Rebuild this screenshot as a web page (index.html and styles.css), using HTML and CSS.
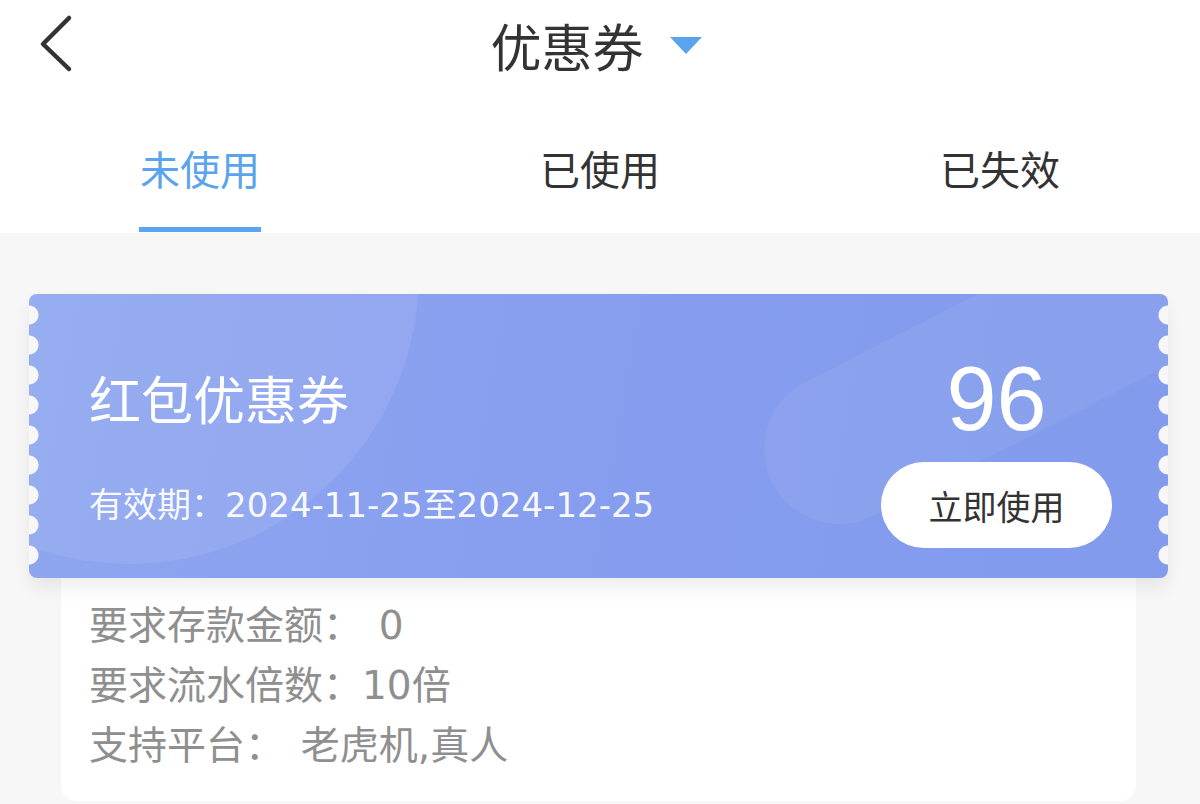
FILE: index.html
```html
<!DOCTYPE html>
<html lang="zh-CN">

<head>
  <meta charset="UTF-8">
  <meta name="viewport" content="width=device-width, initial-scale=1.0">
  <title>优惠券</title>
  <link rel="stylesheet" href="styles.css">
</head>

<body>
  <header class="topbar">
    <a class="back" href="#">
      <svg width="40" height="60" viewBox="0 0 40 60">
        <path d="M31 4 L5 30 L31 55" fill="none" stroke="#333" stroke-width="4.5"
          stroke-linecap="round" stroke-linejoin="round" />
      </svg>
    </a>
    <div class="title">
      <span>优惠券</span>
      <svg class="caret" width="32" height="17" viewBox="0 0 32 17">
        <polygon points="0,0 32,0 16,17" fill="#59a3ef" />
      </svg>
    </div>
  </header>

  <nav class="tabs">
    <div class="tab active">未使用</div>
    <div class="tab">已使用</div>
    <div class="tab">已失效</div>
  </nav>

  <main class="list">
    <div class="coupon">
      <div class="coupon-card">
        <div class="deco"></div>
        <div class="card-left">
          <div class="card-title">红包优惠券</div>
          <div class="card-date">有效期：2024-11-25至2024-12-25</div>
        </div>
        <div class="card-right">
          <div class="amount">96</div>
          <button class="use-btn">立即使用</button>
        </div>
      </div>
      <div class="coupon-detail">
        <p>要求存款金额：&nbsp; 0</p>
        <p>要求流水倍数：10倍</p>
        <p>支持平台：&nbsp; 老虎机,真人</p>
      </div>
    </div>
  </main>
</body>

</html>
```

FILE: styles.css
```css
* {
  box-sizing: border-box;
}

body {
  margin: 0;
  width: 1200px;
  height: 804px;
  overflow: hidden;
  font-family: "Noto Sans CJK SC", "Noto Sans", sans-serif;
  background-color: #f7f7f7;
  color: #333;
}

.topbar {
  position: relative;
  height: 90px;
  background: white;
  display: flex;
  align-items: center;
  justify-content: center;
}

.back {
  position: absolute;
  left: 38px;
  top: 14px;
  display: block;
}

.title {
  display: flex;
  align-items: center;
  gap: 26px;
  font-size: 51px;
  color: #333;
  line-height: 1;
  margin-right: 8px;
}

.tabs {
  height: 143px;
  background: white;
  display: flex;
}

.tab {
  position: relative;
  flex: 1;
  display: flex;
  align-items: center;
  justify-content: center;
  padding-top: 12px;
  font-size: 40px;
  color: #333;
}

.tab.active {
  color: #5ba4ec;
}

.tab.active::after {
  content: "";
  position: absolute;
  left: 139px;
  bottom: 1px;
  width: 122px;
  height: 5px;
  background: #5aa5ef;
}

.list {
  padding: 61px 32px 0 29px;
}

.coupon {
  width: 1139px;
}

.coupon-card {
  position: relative;
  z-index: 2;
  height: 284px;
  border-radius: 8px;
  background: linear-gradient(100deg, #8ea6ef 0%, #869def 55%, #829bec 100%);
  box-shadow: 0 10px 18px rgba(0, 0, 0, 0.07);
  display: flex;
  justify-content: space-between;
  color: white;
}

/* scalloped edges */
.coupon-card::before,
.coupon-card::after {
  content: "";
  position: absolute;
  top: 6px;
  width: 10px;
  height: 270px;
  background-size: 10px 30px;
  background-repeat: repeat-y;
}

.coupon-card::before {
  left: 0;
  background-image: radial-gradient(circle at 0 15px, #f7f7f7 9px, transparent 10px);
}

.coupon-card::after {
  right: 0;
  background-image: radial-gradient(circle at 10px 15px, #f7f7f7 9px, transparent 10px);
}

.deco {
  position: absolute;
  inset: 0;
  overflow: hidden;
  border-radius: 8px;
}

.deco::before {
  content: "";
  position: absolute;
  left: -190px;
  top: -310px;
  width: 580px;
  height: 580px;
  border-radius: 50%;
  background: rgba(255, 255, 255, 0.08);
}

.deco::after {
  content: "";
  position: absolute;
  left: 735px;
  top: 80px;
  width: 560px;
  height: 150px;
  border-radius: 75px;
  background: rgba(255, 255, 255, 0.05);
  transform: rotate(-27deg);
  transform-origin: 75px 75px;
}

.card-left {
  position: relative;
  padding: 72px 0 0 60px;
}

.card-title {
  font-size: 52px;
  line-height: 64px;
}

.card-date {
  margin-top: 55px;
  font-family: "DejaVu Sans", "Noto Sans CJK SC", sans-serif;
  font-size: 34px;
  line-height: 40px;
  color: rgba(255, 255, 255, 0.95);
}

.card-right {
  position: relative;
  display: flex;
  flex-direction: column;
  align-items: center;
  padding: 54px 56px 0 0;
}

.amount {
  font-family: "Liberation Sans", Arial, sans-serif;
  font-size: 90px;
  line-height: 102px;
}

.use-btn {
  margin-top: 12px;
  width: 231px;
  height: 86px;
  border: none;
  border-radius: 43px;
  background: white;
  color: #333;
  font-family: inherit;
  font-size: 34px;
  padding: 0;
}

.coupon-detail {
  position: relative;
  z-index: 1;
  margin: 0 32px 0 32px;
  height: 223px;
  background: white;
  border-radius: 0 0 16px 16px;
  padding: 18px 28px 0;
}

.coupon-detail p {
  margin: 0;
  font-family: "DejaVu Sans", "Noto Sans CJK SC", sans-serif;
  font-size: 39px;
  line-height: 60px;
  word-spacing: -4px;
  color: #8f8f8f;
}
```
